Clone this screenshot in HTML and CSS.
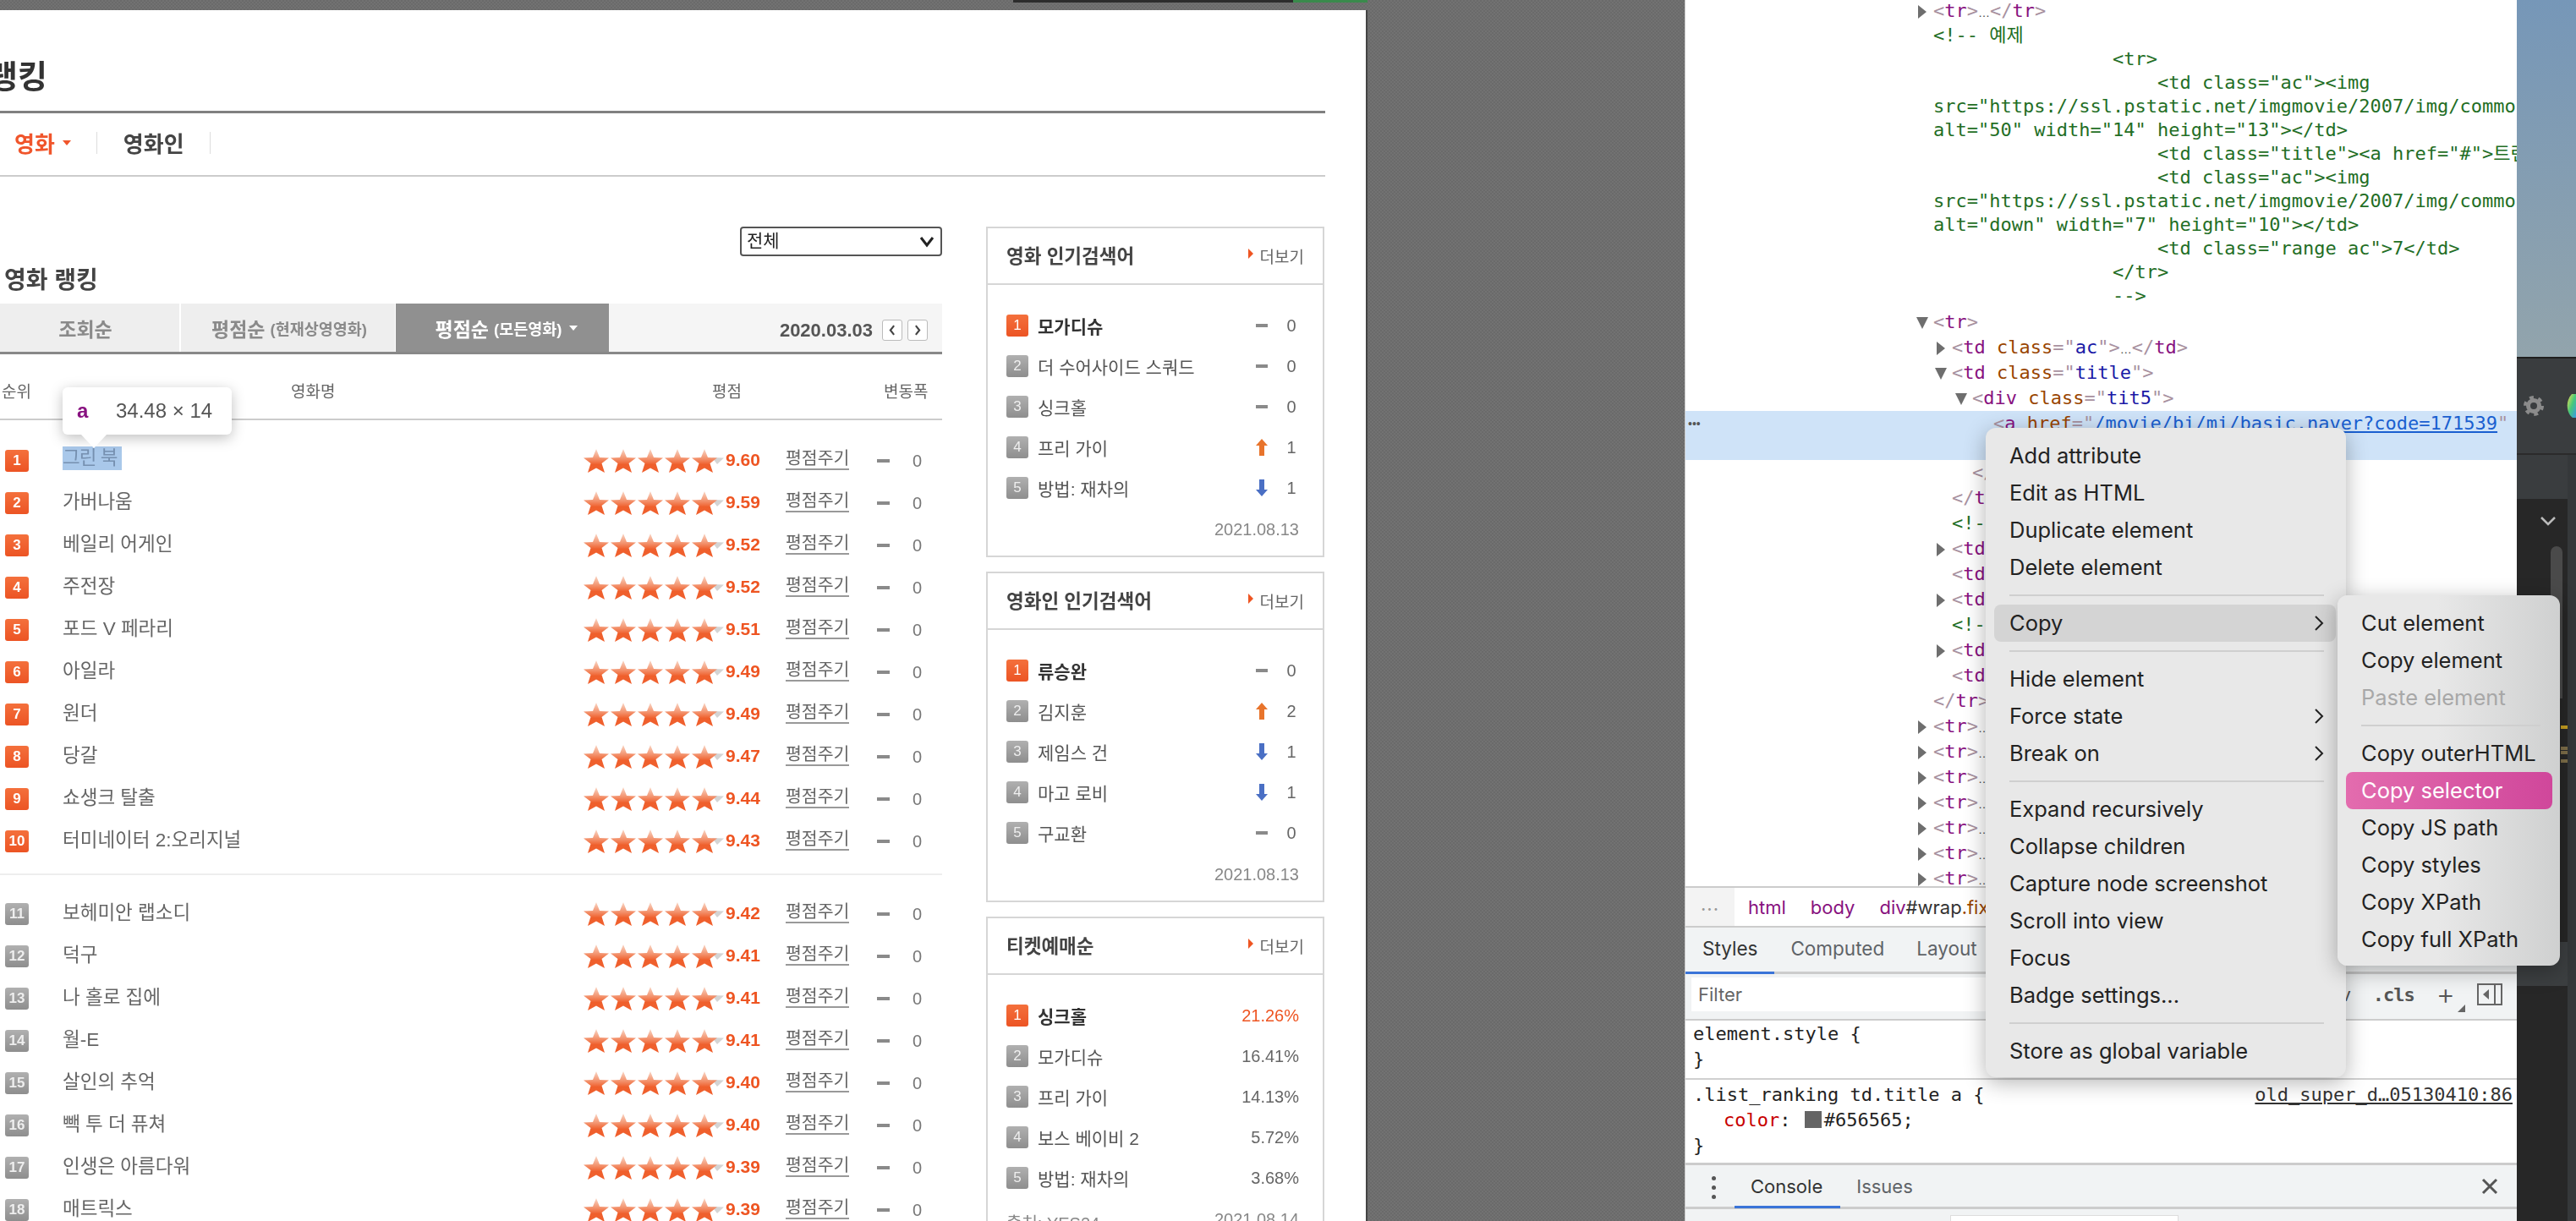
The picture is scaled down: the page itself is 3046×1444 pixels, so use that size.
FILE: index.html
```html
<!DOCTYPE html>
<html lang="ko">
<head>
  <meta charset="UTF-8">
  <title>영화 랭킹</title>
  <link rel="stylesheet" href="styles.css">
</head>
<body>

  <svg class="defs" width="0" height="0">
    <defs>
      <linearGradient id="starFill" x1="0" y1="0" x2="0" y2="1">
        <stop offset="0" stop-color="#f9d8c8"/>
        <stop offset="0.42" stop-color="#f3906a"/>
        <stop offset="0.66" stop-color="#ef5f2c"/>
        <stop offset="1" stop-color="#f0602e"/>
      </linearGradient>
      <linearGradient id="logoFill" x1="0" y1="0" x2="1" y2="1">
        <stop offset="0" stop-color="#f5e050"/>
        <stop offset="0.5" stop-color="#46c87a"/>
        <stop offset="1" stop-color="#3a9ae0"/>
      </linearGradient>
      <polygon id="star" points="15,0 19,10 30,10.500 21.500,17 25,28 15,22.500 5,28 8.500,17 0,10.500 11,10" fill="url(#starFill)"/>
      <symbol id="fiveStars" viewBox="0 0 168 28">
        <polygon points="152,10 166,10.500 158,18" fill="#d4d4d4"/>
        <use href="#star" x="0"/>
        <use href="#star" x="32"/>
        <use href="#star" x="64"/>
        <use href="#star" x="96"/>
        <use href="#star" x="128"/>
      </symbol>
      <symbol id="arrowUp" viewBox="0 0 14 20">
        <path d="M7 0 14 8H10V20H4V8H0Z" fill="#e8742c"/>
      </symbol>
      <symbol id="arrowDown" viewBox="0 0 14 20">
        <path d="M7 20 14 12H10V0H4V12H0Z" fill="#4a6fc4"/>
      </symbol>
      <symbol id="menuArrow" viewBox="0 0 12 20">
        <path d="M2 2 10 10 2 18" fill="none" stroke="#222" stroke-width="2"/>
      </symbol>
    </defs>
  </svg>

  <div class="desktop">

    <!-- 왼쪽 브라우저 화면 -->
    <div class="browser">
      <div class="window-strip"><span class="strip-dark"></span><span class="strip-green"></span></div>
      <div class="page">
        <h1 class="page-title">랭킹</h1>
        <div class="section-tabs">
          <a class="section-tab on">영화<i class="caret"></i></a>
          <a class="section-tab">영화인</a>
        </div>

        <div class="columns">
          <div class="main">
            <div class="select-row">
              <select class="genre"><option>전체</option></select>
              <svg class="genre-arrow" viewBox="0 0 18 14"><path d="M2 2 9 11 16 2"/></svg>
            </div>
            <h2 class="rank-title">영화 랭킹</h2>

            <div class="rank-tabs">
              <a class="rank-tab tab-count">조회순</a>
              <a class="rank-tab tab-now">평점순<small>(현재상영영화)</small></a>
              <a class="rank-tab tab-all on">평점순<small>(모든영화)</small><i class="caret white"></i></a>
              <div class="rank-date">
                <span>2020.03.03</span>
                <a class="day-btn"><svg viewBox="0 0 10 14"><path d="M7 2 3 7l4 5" /></svg></a>
                <a class="day-btn"><svg viewBox="0 0 10 14"><path d="M3 2l4 5-4 5" /></svg></a>
              </div>
            </div>

            <div class="rank-head">
              <span>순위</span><span>영화명</span><span>평점</span><span>변동폭</span>
            </div>

            <div class="rank-list">
              <div class="rank-row"><span class="badge top">1</span><span class="movie"><a class="picked">그린 북</a></span><svg class="stars"><use href="#fiveStars"/></svg><span class="score">9.60</span><a class="rate">평점주기</a><i class="dash"></i><span class="num">0</span></div>
              <div class="rank-row"><span class="badge top">2</span><span class="movie">가버나움</span><svg class="stars"><use href="#fiveStars"/></svg><span class="score">9.59</span><a class="rate">평점주기</a><i class="dash"></i><span class="num">0</span></div>
              <div class="rank-row"><span class="badge top">3</span><span class="movie">베일리 어게인</span><svg class="stars"><use href="#fiveStars"/></svg><span class="score">9.52</span><a class="rate">평점주기</a><i class="dash"></i><span class="num">0</span></div>
              <div class="rank-row"><span class="badge top">4</span><span class="movie">주전장</span><svg class="stars"><use href="#fiveStars"/></svg><span class="score">9.52</span><a class="rate">평점주기</a><i class="dash"></i><span class="num">0</span></div>
              <div class="rank-row"><span class="badge top">5</span><span class="movie">포드 V 페라리</span><svg class="stars"><use href="#fiveStars"/></svg><span class="score">9.51</span><a class="rate">평점주기</a><i class="dash"></i><span class="num">0</span></div>
              <div class="rank-row"><span class="badge top">6</span><span class="movie">아일라</span><svg class="stars"><use href="#fiveStars"/></svg><span class="score">9.49</span><a class="rate">평점주기</a><i class="dash"></i><span class="num">0</span></div>
              <div class="rank-row"><span class="badge top">7</span><span class="movie">원더</span><svg class="stars"><use href="#fiveStars"/></svg><span class="score">9.49</span><a class="rate">평점주기</a><i class="dash"></i><span class="num">0</span></div>
              <div class="rank-row"><span class="badge top">8</span><span class="movie">당갈</span><svg class="stars"><use href="#fiveStars"/></svg><span class="score">9.47</span><a class="rate">평점주기</a><i class="dash"></i><span class="num">0</span></div>
              <div class="rank-row"><span class="badge top">9</span><span class="movie">쇼생크 탈출</span><svg class="stars"><use href="#fiveStars"/></svg><span class="score">9.44</span><a class="rate">평점주기</a><i class="dash"></i><span class="num">0</span></div>
              <div class="rank-row"><span class="badge top">10</span><span class="movie">터미네이터 2:오리지널</span><svg class="stars"><use href="#fiveStars"/></svg><span class="score">9.43</span><a class="rate">평점주기</a><i class="dash"></i><span class="num">0</span></div>
            </div>
            <div class="rank-divider"></div>
            <div class="rank-list">
              <div class="rank-row"><span class="badge">11</span><span class="movie">보헤미안 랩소디</span><svg class="stars"><use href="#fiveStars"/></svg><span class="score">9.42</span><a class="rate">평점주기</a><i class="dash"></i><span class="num">0</span></div>
              <div class="rank-row"><span class="badge">12</span><span class="movie">덕구</span><svg class="stars"><use href="#fiveStars"/></svg><span class="score">9.41</span><a class="rate">평점주기</a><i class="dash"></i><span class="num">0</span></div>
              <div class="rank-row"><span class="badge">13</span><span class="movie">나 홀로 집에</span><svg class="stars"><use href="#fiveStars"/></svg><span class="score">9.41</span><a class="rate">평점주기</a><i class="dash"></i><span class="num">0</span></div>
              <div class="rank-row"><span class="badge">14</span><span class="movie">월-E</span><svg class="stars"><use href="#fiveStars"/></svg><span class="score">9.41</span><a class="rate">평점주기</a><i class="dash"></i><span class="num">0</span></div>
              <div class="rank-row"><span class="badge">15</span><span class="movie">살인의 추억</span><svg class="stars"><use href="#fiveStars"/></svg><span class="score">9.40</span><a class="rate">평점주기</a><i class="dash"></i><span class="num">0</span></div>
              <div class="rank-row"><span class="badge">16</span><span class="movie">빽 투 더 퓨쳐</span><svg class="stars"><use href="#fiveStars"/></svg><span class="score">9.40</span><a class="rate">평점주기</a><i class="dash"></i><span class="num">0</span></div>
              <div class="rank-row"><span class="badge">17</span><span class="movie">인생은 아름다워</span><svg class="stars"><use href="#fiveStars"/></svg><span class="score">9.39</span><a class="rate">평점주기</a><i class="dash"></i><span class="num">0</span></div>
              <div class="rank-row"><span class="badge">18</span><span class="movie">매트릭스</span><svg class="stars"><use href="#fiveStars"/></svg><span class="score">9.39</span><a class="rate">평점주기</a><i class="dash"></i><span class="num">0</span></div>
            </div>
          </div>

          <div class="aside">
            <div class="box">
              <div class="box-head"><b>영화 인기검색어</b><a class="more">더보기</a></div>
              <ul class="box-list">
                <li class="first"><span class="badge small top">1</span><span class="name">모가디슈</span><i class="dash wide"></i><span class="count">0</span></li>
                <li><span class="badge small">2</span><span class="name">더 수어사이드 스쿼드</span><i class="dash wide"></i><span class="count">0</span></li>
                <li><span class="badge small">3</span><span class="name">싱크홀</span><i class="dash wide"></i><span class="count">0</span></li>
                <li><span class="badge small">4</span><span class="name">프리 가이</span><svg class="arrow"><use href="#arrowUp"/></svg><span class="count">1</span></li>
                <li><span class="badge small">5</span><span class="name">방법: 재차의</span><svg class="arrow"><use href="#arrowDown"/></svg><span class="count">1</span></li>
              </ul>
              <div class="box-foot"><span>2021.08.13</span></div>
            </div>

            <div class="box">
              <div class="box-head"><b>영화인 인기검색어</b><a class="more">더보기</a></div>
              <ul class="box-list">
                <li class="first"><span class="badge small top">1</span><span class="name">류승완</span><i class="dash wide"></i><span class="count">0</span></li>
                <li><span class="badge small">2</span><span class="name">김지훈</span><svg class="arrow"><use href="#arrowUp"/></svg><span class="count">2</span></li>
                <li><span class="badge small">3</span><span class="name">제임스 건</span><svg class="arrow"><use href="#arrowDown"/></svg><span class="count">1</span></li>
                <li><span class="badge small">4</span><span class="name">마고 로비</span><svg class="arrow"><use href="#arrowDown"/></svg><span class="count">1</span></li>
                <li><span class="badge small">5</span><span class="name">구교환</span><i class="dash wide"></i><span class="count">0</span></li>
              </ul>
              <div class="box-foot"><span>2021.08.13</span></div>
            </div>

            <div class="box">
              <div class="box-head"><b>티켓예매순</b><a class="more">더보기</a></div>
              <ul class="box-list">
                <li class="first"><span class="badge small top">1</span><span class="name">싱크홀</span><span class="percent red">21.26%</span></li>
                <li><span class="badge small">2</span><span class="name">모가디슈</span><span class="percent">16.41%</span></li>
                <li><span class="badge small">3</span><span class="name">프리 가이</span><span class="percent">14.13%</span></li>
                <li><span class="badge small">4</span><span class="name">보스 베이비 2</span><span class="percent">5.72%</span></li>
                <li><span class="badge small">5</span><span class="name">방법: 재차의</span><span class="percent">3.68%</span></li>
              </ul>
              <div class="box-foot"><span>출처: YES24</span><span>2021.08.14</span></div>
            </div>
          </div>
        </div>

        <!-- 요소 검사 툴팁 -->
        <div class="inspect-tip"><b>a</b><span>34.48 × 14</span></div>
      </div>
    </div>

    <!-- 개발자 도구 -->
    <div class="devtools">
      <div class="dom">
        <div class="row i0"><i class="tri right"></i><span class="br">&lt;</span><span class="tag">tr</span><span class="br">&gt;</span><span class="dots">…</span><span class="br">&lt;/</span><span class="tag">tr</span><span class="br">&gt;</span></div>
        <div class="comment i0">&lt;!-- 예제</div>
        <div class="comment i0">                &lt;tr&gt;</div>
        <div class="comment i0">                    &lt;td class="ac"&gt;&lt;img</div>
        <div class="comment i0">src="https://ssl.pstatic.net/imgmovie/2007/img/common/bullet/icon_rank.gif"</div>
        <div class="comment i0">alt="50" width="14" height="13"&gt;&lt;/td&gt;</div>
        <div class="comment i0">                    &lt;td class="title"&gt;&lt;a href="#"&gt;트랜스포머&lt;/a&gt;&lt;/td&gt;</div>
        <div class="comment i0">                    &lt;td class="ac"&gt;&lt;img</div>
        <div class="comment i0">src="https://ssl.pstatic.net/imgmovie/2007/img/common/bullet/icon_down.gif"</div>
        <div class="comment i0">alt="down" width="7" height="10"&gt;&lt;/td&gt;</div>
        <div class="comment i0">                    &lt;td class="range ac"&gt;7&lt;/td&gt;</div>
        <div class="comment i0">                &lt;/tr&gt;</div>
        <div class="comment i0">                --&gt;</div>
        <div class="row i0 after-comment"><i class="tri down"></i><span class="br">&lt;</span><span class="tag">tr</span><span class="br">&gt;</span></div>
        <div class="row i1"><i class="tri right"></i><span class="br">&lt;</span><span class="tag">td</span> <span class="attr">class</span><span class="br">="</span><span class="val">ac</span><span class="br">"&gt;</span><span class="dots">…</span><span class="br">&lt;/</span><span class="tag">td</span><span class="br">&gt;</span></div>
        <div class="row i1"><i class="tri down"></i><span class="br">&lt;</span><span class="tag">td</span> <span class="attr">class</span><span class="br">="</span><span class="val">title</span><span class="br">"&gt;</span></div>
        <div class="row i2"><i class="tri down"></i><span class="br">&lt;</span><span class="tag">div</span> <span class="attr">class</span><span class="br">="</span><span class="val">tit5</span><span class="br">"&gt;</span></div>
        <div class="row i3 current"><em class="more-dots">•••</em><span class="br">&lt;</span><span class="tag">a</span> <span class="attr">href</span><span class="br">="</span><span class="link">/movie/bi/mi/basic.naver?code=171539</span><span class="br">"</span></div>
        <div class="row i2"><span class="br">&lt;/</span><span class="tag">div</span><span class="br">&gt;</span></div>
        <div class="row i1"><span class="br">&lt;/</span><span class="tag">td</span><span class="br">&gt;</span></div>
        <div class="row i1"><span class="cmt">&lt;!-- 평점 --&gt;</span></div>
        <div class="row i1"><i class="tri right"></i><span class="br">&lt;</span><span class="tag">td</span><span class="br">&gt;</span></div>
        <div class="row i1"><span class="br">&lt;</span><span class="tag">td</span><span class="br">&gt;</span></div>
        <div class="row i1"><i class="tri right"></i><span class="br">&lt;</span><span class="tag">td</span><span class="br">&gt;</span></div>
        <div class="row i1"><span class="cmt">&lt;!-- 변동 --&gt;</span></div>
        <div class="row i1"><i class="tri right"></i><span class="br">&lt;</span><span class="tag">td</span><span class="br">&gt;</span></div>
        <div class="row i1"><span class="br">&lt;</span><span class="tag">td</span><span class="br">&gt;</span></div>
        <div class="row i0"><span class="br">&lt;/</span><span class="tag">tr</span><span class="br">&gt;</span></div>
        <div class="row i0"><i class="tri right"></i><span class="br">&lt;</span><span class="tag">tr</span><span class="br">&gt;</span><span class="dots">…</span></div>
        <div class="row i0"><i class="tri right"></i><span class="br">&lt;</span><span class="tag">tr</span><span class="br">&gt;</span><span class="dots">…</span></div>
        <div class="row i0"><i class="tri right"></i><span class="br">&lt;</span><span class="tag">tr</span><span class="br">&gt;</span><span class="dots">…</span></div>
        <div class="row i0"><i class="tri right"></i><span class="br">&lt;</span><span class="tag">tr</span><span class="br">&gt;</span><span class="dots">…</span></div>
        <div class="row i0"><i class="tri right"></i><span class="br">&lt;</span><span class="tag">tr</span><span class="br">&gt;</span><span class="dots">…</span></div>
        <div class="row i0"><i class="tri right"></i><span class="br">&lt;</span><span class="tag">tr</span><span class="br">&gt;</span><span class="dots">…</span></div>
        <div class="row i0"><i class="tri right"></i><span class="br">&lt;</span><span class="tag">tr</span><span class="br">&gt;</span><span class="dots">…</span></div>
      </div>

      <div class="crumbs">
        <span class="crumb-more">...</span>
        <a>html</a><a>body</a><a>div<span class="crumb-id">#wrap</span><span class="crumb-class">.fix</span></a>
      </div>

      <div class="panel-tabs">
        <a class="panel-tab on">Styles</a><a class="panel-tab">Computed</a><a class="panel-tab">Layout</a>
      </div>

      <div class="filter-row">
        <div class="filter-input">Filter</div>
        <div class="filter-tools">
          <span>:hov</span>
          <span class="cls">.cls</span>
          <span class="plus">+<i></i></span>
          <span class="sidebar-toggle"><i></i></span>
        </div>
      </div>

      <div class="rule">
        <div>element.style {</div>
        <div>}</div>
      </div>
      <div class="rule second">
        <a class="source">old_super_d…05130410:86</a>
        <div>.list_ranking td.title a {</div>
        <div class="decl"><span class="prop">color</span>: <i class="swatch"></i>#656565;</div>
        <div>}</div>
      </div>

      <div class="drawer">
        <span class="kebab"><i></i><i></i><i></i></span>
        <a class="drawer-tab on">Console</a><a class="drawer-tab">Issues</a>
        <svg class="drawer-close" viewBox="0 0 20 20"><path d="M2 2 18 18M18 2 2 18"/></svg>
      </div>
      <div class="console-bar"><span class="console-filter"></span></div>
    </div>

    <!-- 오른쪽 다른 창 -->
    <div class="behind">
      <div class="wallpaper"></div>
      <div class="app-bar">
        <svg class="gear" viewBox="0 0 24 24">
          <circle cx="12" cy="12" r="6.500" fill="none" stroke="#8b8b8b" stroke-width="5"/>
          <circle cx="12" cy="12" r="10" fill="none" stroke="#8b8b8b" stroke-width="4" stroke-dasharray="4.800 5.670"/>
        </svg>
        <svg class="app-logo" viewBox="0 0 12 28"><path d="M7 0H12V28H8C2 24 -2 10 7 0Z" fill="url(#logoFill)"/></svg>
      </div>
      <div class="app-body">
        <div class="app-left">
          <div class="app-sub"></div>
          <svg class="chevron" viewBox="0 0 18 12"><path d="M1 2 9 10 17 2"/></svg>
          <div class="scroll-thumb"></div>
          <div class="app-mark"></div>
          <div class="app-panel"></div>
        </div>
      </div>
    </div>

    <!-- 컨텍스트 메뉴 -->
    <div class="menu">
      <div class="menu-item">Add attribute</div>
      <div class="menu-item">Edit as HTML</div>
      <div class="menu-item">Duplicate element</div>
      <div class="menu-item">Delete element</div>
      <div class="menu-sep"></div>
      <div class="menu-item active">Copy<svg class="sub-arrow"><use href="#menuArrow"/></svg></div>
      <div class="menu-sep"></div>
      <div class="menu-item">Hide element</div>
      <div class="menu-item">Force state<svg class="sub-arrow"><use href="#menuArrow"/></svg></div>
      <div class="menu-item">Break on<svg class="sub-arrow"><use href="#menuArrow"/></svg></div>
      <div class="menu-sep"></div>
      <div class="menu-item">Expand recursively</div>
      <div class="menu-item">Collapse children</div>
      <div class="menu-item">Capture node screenshot</div>
      <div class="menu-item">Scroll into view</div>
      <div class="menu-item">Focus</div>
      <div class="menu-item">Badge settings...</div>
      <div class="menu-sep"></div>
      <div class="menu-item">Store as global variable</div>
    </div>

    <div class="menu submenu">
      <div class="menu-item">Cut element</div>
      <div class="menu-item">Copy element</div>
      <div class="menu-item disabled">Paste element</div>
      <div class="menu-sep"></div>
      <div class="menu-item">Copy outerHTML</div>
      <div class="menu-item picked-item">Copy selector</div>
      <div class="menu-item">Copy JS path</div>
      <div class="menu-item">Copy styles</div>
      <div class="menu-item">Copy XPath</div>
      <div class="menu-item">Copy full XPath</div>
    </div>

  </div>

</body>
</html>
```

FILE: styles.css
```css
* {
  box-sizing: border-box;
}

html, body {
  margin: 0;
  padding: 0;
}

body {
  font-family: "Liberation Sans", "Noto Sans CJK KR", sans-serif;
  background-color: #6d6d6d;
}

a {
  color: inherit;
  text-decoration: none;
}

i, em {
  font-style: normal;
}

.defs {
  position: absolute;
}

.desktop {
  position: relative;
  display: flex;
  width: 3046px;
  height: 1444px;
  overflow: hidden;
  background: repeating-conic-gradient(#6a6a6a 0 25%, #727272 0 50%) 0 0 / 4px 4px;
}

/* ---------- browser page ---------- */

.browser {
  width: 1617px;
  margin-right: 375px;
  flex-shrink: 0;
}

.window-strip {
  display: flex;
  height: 3px;
  margin: 0 0 9px 1198px;
}

.strip-dark {
  width: 331px;
  background-color: #2c2c2c;
}

.strip-green {
  width: 88px;
  background-color: #3a8a4c;
}

.page {
  position: relative;
  height: 1432px;
  overflow: hidden;
  background-color: #fff;
  border-right: 2px solid #444;
  color: #656565;
  filter: blur(0.5px);
}

.page-title {
  height: 122px;
  margin: 0 48px 0 -14px;
  padding-top: 60px;
  border-bottom: 3px solid #808080;
  font-size: 38px;
  line-height: 38px;
  font-weight: 700;
  color: #333;
}

.section-tabs {
  display: flex;
  align-items: center;
  height: 75px;
  margin-right: 48px;
  padding: 0 0 4px 17px;
  border-bottom: 2px solid #ccc;
}

.section-tab {
  display: flex;
  align-items: center;
  height: 26px;
  padding-right: 30px;
  margin-right: 31px;
  border-right: 1px solid #ddd;
  font-size: 26px;
  font-weight: 700;
  color: #444;
}

.section-tab.on {
  color: #f0552b;
}

.caret {
  display: inline-block;
  margin-left: 9px;
  border: 5px solid transparent;
  border-top: 6px solid #f0552b;
  border-bottom: 0;
}

.caret.white {
  border-top-color: #fff;
}

.columns {
  display: flex;
  gap: 52px;
  margin-top: 59px;
}

.main {
  width: 1114px;
  flex-shrink: 0;
}

.select-row {
  position: relative;
  display: flex;
  justify-content: flex-end;
  height: 35px;
}

.genre {
  appearance: none;
  width: 239px;
  height: 35px;
  padding: 0 0 2px 6px;
  font-family: "Liberation Sans", "Noto Sans CJK KR", sans-serif;
  font-size: 21px;
  color: #222;
  background-color: #fff;
  border: 2px solid #555;
  border-radius: 4px;
}

.genre-arrow {
  position: absolute;
  right: 9px;
  top: 11px;
  width: 18px;
  height: 14px;
  fill: none;
  stroke: #222;
  stroke-width: 3;
}

.rank-title {
  height: 56px;
  margin: 0;
  padding: 14px 0 0 5px;
  font-size: 28px;
  line-height: 30px;
  font-weight: 700;
  color: #444;
}

.rank-tabs {
  display: flex;
  height: 60px;
  background-color: #f5f5f5;
  border-bottom: 3px solid #888;
}

.rank-tab {
  display: flex;
  align-items: center;
  justify-content: center;
  font-size: 23px;
  font-weight: 700;
  color: #8a8a8a;
  background-color: #eee;
}

.rank-tab small {
  margin-left: 6px;
  font-size: 18.5px;
}

.tab-count {
  width: 214px;
  padding-right: 10px;
  border-right: 2px solid #fff;
}

.tab-now {
  width: 254px;
  padding-left: 3px;
  border-right: 1px solid #fff;
}

.tab-all {
  width: 252px;
  padding-left: 10px;
}

.rank-tab.on {
  color: #fff;
  background-color: #909090;
}

.rank-date {
  flex: 1;
  display: flex;
  align-items: center;
  justify-content: flex-end;
  gap: 6px;
  padding: 6px 17px 0 0;
  font-size: 22px;
  font-weight: 700;
  color: #555;
}

.rank-date span {
  margin-right: 5px;
}

.day-btn {
  display: flex;
  width: 24px;
  height: 25px;
  background-color: #fff;
  border: 1px solid #bbb;
  border-radius: 3px;
}

.day-btn svg {
  width: 100%;
  height: 100%;
  padding: 4px 3px;
  fill: none;
  stroke: #444;
  stroke-width: 2;
}

.rank-head {
  display: grid;
  grid-template-columns: 342px 498px 203px 1fr;
  align-items: center;
  height: 78px;
  padding: 8px 0 0 2px;
  border-bottom: 2px solid #ccc;
  font-size: 19px;
  color: #666;
}

.rank-list {
  padding-top: 23px;
}

.rank-list + .rank-divider + .rank-list {
  padding-top: 21px;
}

.rank-row {
  display: grid;
  grid-template-columns: 74px 616px 168px 71px 108px 42px auto;
  align-items: center;
  height: 50px;
}

.badge {
  display: block;
  width: 28px;
  height: 26px;
  margin-left: 6px;
  border-radius: 3px;
  background: linear-gradient(#b0b0b0, #8e8e8e);
  color: #eee;
  font-size: 17px;
  font-weight: 700;
  line-height: 26px;
  text-align: center;
}

.badge.top {
  background: linear-gradient(#f4703c, #ec5424);
  color: #fff;
}

.badge.small {
  flex-shrink: 0;
  width: 26px;
  margin-left: 0;
  font-weight: 400;
}

.movie {
  margin-top: -8px;
  font-size: 22.5px;
  white-space: nowrap;
  color: #656565;
}

.picked {
  display: inline-block;
  width: 70px;
  height: 28px;
  margin-top: 2px;
  line-height: 28px;
  background-color: #a9c8ea;
  color: #7690b0;
  white-space: nowrap;
  letter-spacing: -1px;
}

.stars {
  width: 168px;
  height: 28px;
}

.score {
  margin-top: -3px;
  font-size: 21px;
  font-weight: 700;
  color: #ee5522;
}

.rate {
  justify-self: start;
  width: 75px;
  margin-top: -5px;
  font-size: 20.5px;
  line-height: 25px;
  white-space: nowrap;
  border-bottom: 2px solid #999;
}

.dash {
  display: block;
  width: 15px;
  height: 4px;
  background-color: #8a8a8a;
}

.num {
  font-size: 20px;
  color: #777;
}

.rank-divider {
  height: 2px;
  margin-top: 13px;
  background-color: #eee;
}

/* ---------- side boxes ---------- */

.aside {
  flex: 0 0 400px;
  display: flex;
  flex-direction: column;
  gap: 17px;
}

.box {
  height: 391px;
  flex-shrink: 0;
  border: 2px solid #d6d6d6;
}

.box-head {
  display: flex;
  align-items: center;
  justify-content: space-between;
  height: 67px;
  padding: 0 22px;
  border-bottom: 2px solid #d6d6d6;
}

.box-head b {
  margin-top: -3px;
  font-size: 22.5px;
  color: #444;
}

.more {
  position: relative;
  font-size: 19px;
  color: #666;
}

.more::before {
  content: "";
  position: absolute;
  left: -14px;
  top: 5px;
  border: 6px solid transparent;
  border-left: 6px solid #ee5522;
  border-right: 0;
}

.box-list {
  margin: 0;
  padding: 24px 28px 0 22px;
  list-style: none;
}

.box-list li {
  display: flex;
  align-items: center;
  height: 48px;
  font-size: 21px;
  color: #555;
  white-space: nowrap;
}

.box-list li.first {
  font-weight: 700;
  color: #333;
}

.name {
  flex: 1;
  margin-left: 11px;
}

.dash.wide {
  width: 14px;
}

.arrow {
  width: 14px;
  height: 20px;
}

.count {
  width: 18px;
  margin-left: 19px;
  font-size: 20px;
  font-weight: 400;
  color: #666;
  text-align: center;
}

.percent {
  font-size: 20px;
  font-weight: 400;
  color: #666;
}

.percent.red {
  color: #ee5522;
}

.box-foot {
  display: flex;
  justify-content: flex-end;
  padding: 14px 28px 0 22px;
  font-size: 20px;
  color: #888;
}

.box-foot span:first-child:not(:last-child) {
  margin-right: auto;
}

.inspect-tip {
  position: absolute;
  left: 74px;
  top: 446px;
  display: flex;
  align-items: center;
  width: 200px;
  height: 56px;
  padding-left: 17px;
  background-color: #fff;
  border-radius: 6px;
  box-shadow: 0 4px 16px rgba(0, 0, 0, 0.25);
  font-size: 24px;
  color: #555;
}

.inspect-tip::after {
  content: "";
  position: absolute;
  left: 22px;
  top: 56px;
  border: 15px solid transparent;
  border-top: 16px solid #fff;
  border-bottom: 0;
}

.inspect-tip b {
  width: 46px;
  color: #881280;
}

/* ---------- devtools ---------- */

.devtools {
  flex: 0 0 984px;
  min-width: 0;
  width: 984px;
  display: flex;
  flex-direction: column;
  overflow: hidden;
  border-left: 1px solid #ccc;
  background-color: #fff;
  font-family: "DejaVu Sans Mono", "Noto Sans CJK KR", monospace;
  font-size: 22px;
  color: #222;
}

.dom {
  position: relative;
  height: 1052px;
  flex-shrink: 0;
  overflow: hidden;
  margin-top: -2px;
  border-bottom: 2px solid #ccc;
  color: #881280;
}

.row, .comment {
  height: 30px;
  line-height: 30px;
  white-space: pre;
}

.comment {
  height: 28px;
  line-height: 28px;
  color: #236e25;
}

.after-comment {
  margin-top: 2px;
}

.i0 { padding-left: 293px; }
.i1 { padding-left: 315px; }
.i2 { padding-left: 339px; }
.i3 { padding-left: 364px; }

.br { color: #a8919f; }
.tag { color: #881280; }
.attr { color: #994500; }
.val { color: #1a1aa6; }
.cmt { color: #236e25; }

.dots {
  font-family: "Liberation Sans", sans-serif;
  font-size: 14px;
  color: #444;
}

.link {
  color: #1a5fd0;
  text-decoration: underline;
}

.current {
  position: relative;
  height: 58px;
  background-color: #cfe3f8;
}

.more-dots {
  position: absolute;
  left: 3px;
  top: 0;
  font-family: "Liberation Sans", sans-serif;
  font-size: 14px;
  letter-spacing: 0;
  color: #555;
}

.tri {
  display: inline-block;
  width: 18px;
  margin-left: -18px;
  vertical-align: middle;
}

.tri::before {
  content: "";
  display: block;
  border-style: solid;
  border-color: transparent;
}

.tri.right::before {
  width: 0;
  border-width: 8px 0 8px 10px;
  border-left-color: #6e6e6e;
}

.tri.down::before {
  width: 0;
  margin-left: -2px;
  border-width: 14px 7px 0;
  border-top-color: #6e6e6e;
}

.crumbs {
  display: flex;
  align-items: center;
  flex-shrink: 0;
  height: 47px;
  border-bottom: 2px solid #ccc;
  font-family: "Inter", "Liberation Sans", sans-serif;
  color: #881280;
}

.crumbs a {
  margin-right: 29px;
  white-space: nowrap;
}

.crumb-more {
  flex-shrink: 0;
  width: 58px;
  height: 100%;
  margin-right: 16px;
  padding: 6px 0 0 18px;
  background-color: #f3f3f3;
  letter-spacing: 1px;
  color: #999;
}

.crumb-id { color: #333; }
.crumb-class { color: #994500; }

.panel-tabs {
  display: flex;
  flex-shrink: 0;
  height: 55px;
  background-color: #f1f3f4;
  border-bottom: 3px solid #ccc;
  font-family: "Inter", "Liberation Sans", sans-serif;
  font-size: 22.5px;
  color: #5f6368;
}

.panel-tab {
  height: 55px;
  padding: 0 19px;
  line-height: 50px;
}

.panel-tab.on {
  padding: 0 20px;
  color: #333;
  border-bottom: 3px solid #3a74d8;
}

.filter-row {
  display: flex;
  align-items: center;
  justify-content: space-between;
  flex-shrink: 0;
  height: 55px;
  padding: 0 17px 5px 7px;
  background-color: #f1f3f4;
  border-bottom: 2px solid #ccc;
  font-family: "Inter", "Liberation Sans", sans-serif;
  color: #666;
}

.filter-input {
  width: 500px;
  height: 40px;
  padding-left: 8px;
  line-height: 40px;
  background-color: #fff;
}

.filter-tools {
  display: flex;
  align-items: center;
  gap: 26px;
  color: #555;
}

.cls {
  font-family: "DejaVu Sans Mono", monospace;
  font-weight: 700;
  letter-spacing: -1px;
}

.plus {
  position: relative;
  font-size: 34px;
  line-height: 34px;
  font-weight: 300;
}

.plus i {
  position: absolute;
  right: -12px;
  bottom: -4px;
  border-style: solid;
  border-width: 0 0 9px 9px;
  border-color: transparent transparent #666 transparent;
}

.sidebar-toggle {
  position: relative;
  width: 30px;
  height: 26px;
  border: 2px solid #666;
}

.sidebar-toggle::after {
  content: "";
  position: absolute;
  right: 6px;
  top: 0;
  bottom: 0;
  border-left: 2px solid #666;
}

.sidebar-toggle i {
  position: absolute;
  left: 5px;
  top: 5px;
  border-style: solid;
  border-width: 6px 7px 6px 0;
  border-color: transparent #666 transparent transparent;
}

.rule {
  height: 70px;
  padding: 1px 9px 0;
  flex-shrink: 0;
  line-height: 30px;
  border-bottom: 2px solid #d0d0d0;
}

.rule.second {
  position: relative;
  height: 98px;
  padding-top: 3px;
  border-bottom: 0;
}

.source {
  position: absolute;
  right: 5px;
  top: 3px;
  text-decoration: underline;
  color: #333;
}

.decl {
  padding-left: 36px;
}

.prop {
  color: #c80000;
}

.swatch {
  display: inline-block;
  width: 20px;
  height: 20px;
  margin: 0 3px;
  vertical-align: -2px;
  background-color: #656565;
}

.drawer {
  position: relative;
  display: flex;
  align-items: center;
  flex-shrink: 0;
  height: 55px;
  padding-left: 77px;
  background-color: #f1f3f4;
  border-top: 3px solid #ccc;
  border-bottom: 3px solid #ccc;
  font-family: "Inter", "Liberation Sans", sans-serif;
  color: #5f6368;
}

.drawer-tab {
  margin-right: 40px;
}

.drawer-tab.on {
  position: relative;
  color: #333;
}

.drawer-tab.on::after {
  content: "";
  position: absolute;
  left: -19px;
  right: -21px;
  top: 36px;
  height: 3px;
  background-color: #3a74d8;
}

.kebab {
  position: absolute;
  left: 31px;
  top: 13px;
  display: flex;
  flex-direction: column;
  gap: 6px;
}

.kebab i {
  width: 5px;
  height: 5px;
  border-radius: 50%;
  background-color: #555;
}

.drawer-close {
  position: absolute;
  left: 941px;
  top: 15px;
  width: 20px;
  height: 20px;
  fill: none;
  stroke: #555;
  stroke-width: 3;
}

.console-bar {
  flex: 1;
  padding: 7px 0 0 313px;
  background-color: #f1f3f4;
}

.console-filter {
  display: block;
  width: 270px;
  height: 10px;
  background-color: #fff;
  border: 1px solid #ddd;
}

/* ---------- window behind ---------- */

.behind {
  display: flex;
  flex-direction: column;
  width: 70px;
  flex-shrink: 0;
  background-color: #2a2a2a;
}

.wallpaper {
  height: 424px;
  flex-shrink: 0;
  background: linear-gradient(#7697b8, #92a4ac);
  border-bottom: 2px solid #1f1f1f;
}

.app-bar {
  display: flex;
  align-items: center;
  flex-shrink: 0;
  height: 114px;
  padding: 0 0 0 8px;
  background-color: #3a3d3f;
  border-bottom: 2px solid #2b2b2b;
}

.gear {
  flex-shrink: 0;
  width: 24px;
  height: 26px;
  margin: 0 26px 0 0;
}

.app-logo {
  flex-shrink: 0;
  width: 12px;
  height: 28px;
}

.app-body {
  flex: 1;
  display: flex;
  padding-right: 10px;
  background-color: #35383a;
}

.app-left {
  position: relative;
  flex: 1;
  background-color: #272727;
}

.app-sub {
  height: 52px;
  background-color: #3a3d3f;
}

.chevron {
  position: absolute;
  left: 28px;
  top: 72px;
  width: 18px;
  height: 12px;
  fill: none;
  stroke: #bbb;
  stroke-width: 2.500;
}

.scroll-thumb {
  position: absolute;
  left: 40px;
  top: 108px;
  width: 14px;
  height: 180px;
  border-radius: 7px 7px 0 0;
  background-color: #4a4a4a;
}

.app-mark {
  position: absolute;
  right: 0;
  top: 320px;
  width: 8px;
  height: 4px;
  background-color: #c8a020;
  box-shadow: 0 25px 0 #80704a, 0 30px 0 #80704a, 0 40px 0 #80704a;
}

.app-panel {
  position: absolute;
  left: 0;
  right: 0;
  top: 576px;
  height: 52px;
  background-color: #3c3f41;
}

/* ---------- context menus ---------- */

.menu {
  position: absolute;
  left: 2348px;
  top: 506px;
  width: 426px;
  padding: 11px 12px 9px 10px;
  background-color: #e8e8e8;
  border-radius: 12px;
  box-shadow: 0 6px 26px rgba(0, 0, 0, 0.3);
  font-family: "Inter", "Liberation Sans", sans-serif;
  font-size: 25.5px;
  color: #222;
}

.submenu {
  left: 2764px;
  top: 704px;
  width: 263px;
  padding: 11px 9px 9px 10px;
  background: linear-gradient(90deg, #e8e8e8 45%, #cfd0d0);
}

.menu-item {
  position: relative;
  height: 44px;
  padding-left: 18px;
  line-height: 44px;
  white-space: nowrap;
  border-radius: 8px;
}

.menu-item.active {
  background-color: #d4d4d4;
}

.menu-item.disabled {
  color: #a8a8a8;
}

.menu-item.picked-item {
  color: #fff;
  background: linear-gradient(90deg, #e36cae, #d0479b);
}

.menu-sep {
  height: 2px;
  margin: 10px 14px 10px 18px;
  background-color: #cfcfcf;
}

.sub-arrow {
  position: absolute;
  right: 14px;
  top: 12px;
  width: 12px;
  height: 20px;
}
```
